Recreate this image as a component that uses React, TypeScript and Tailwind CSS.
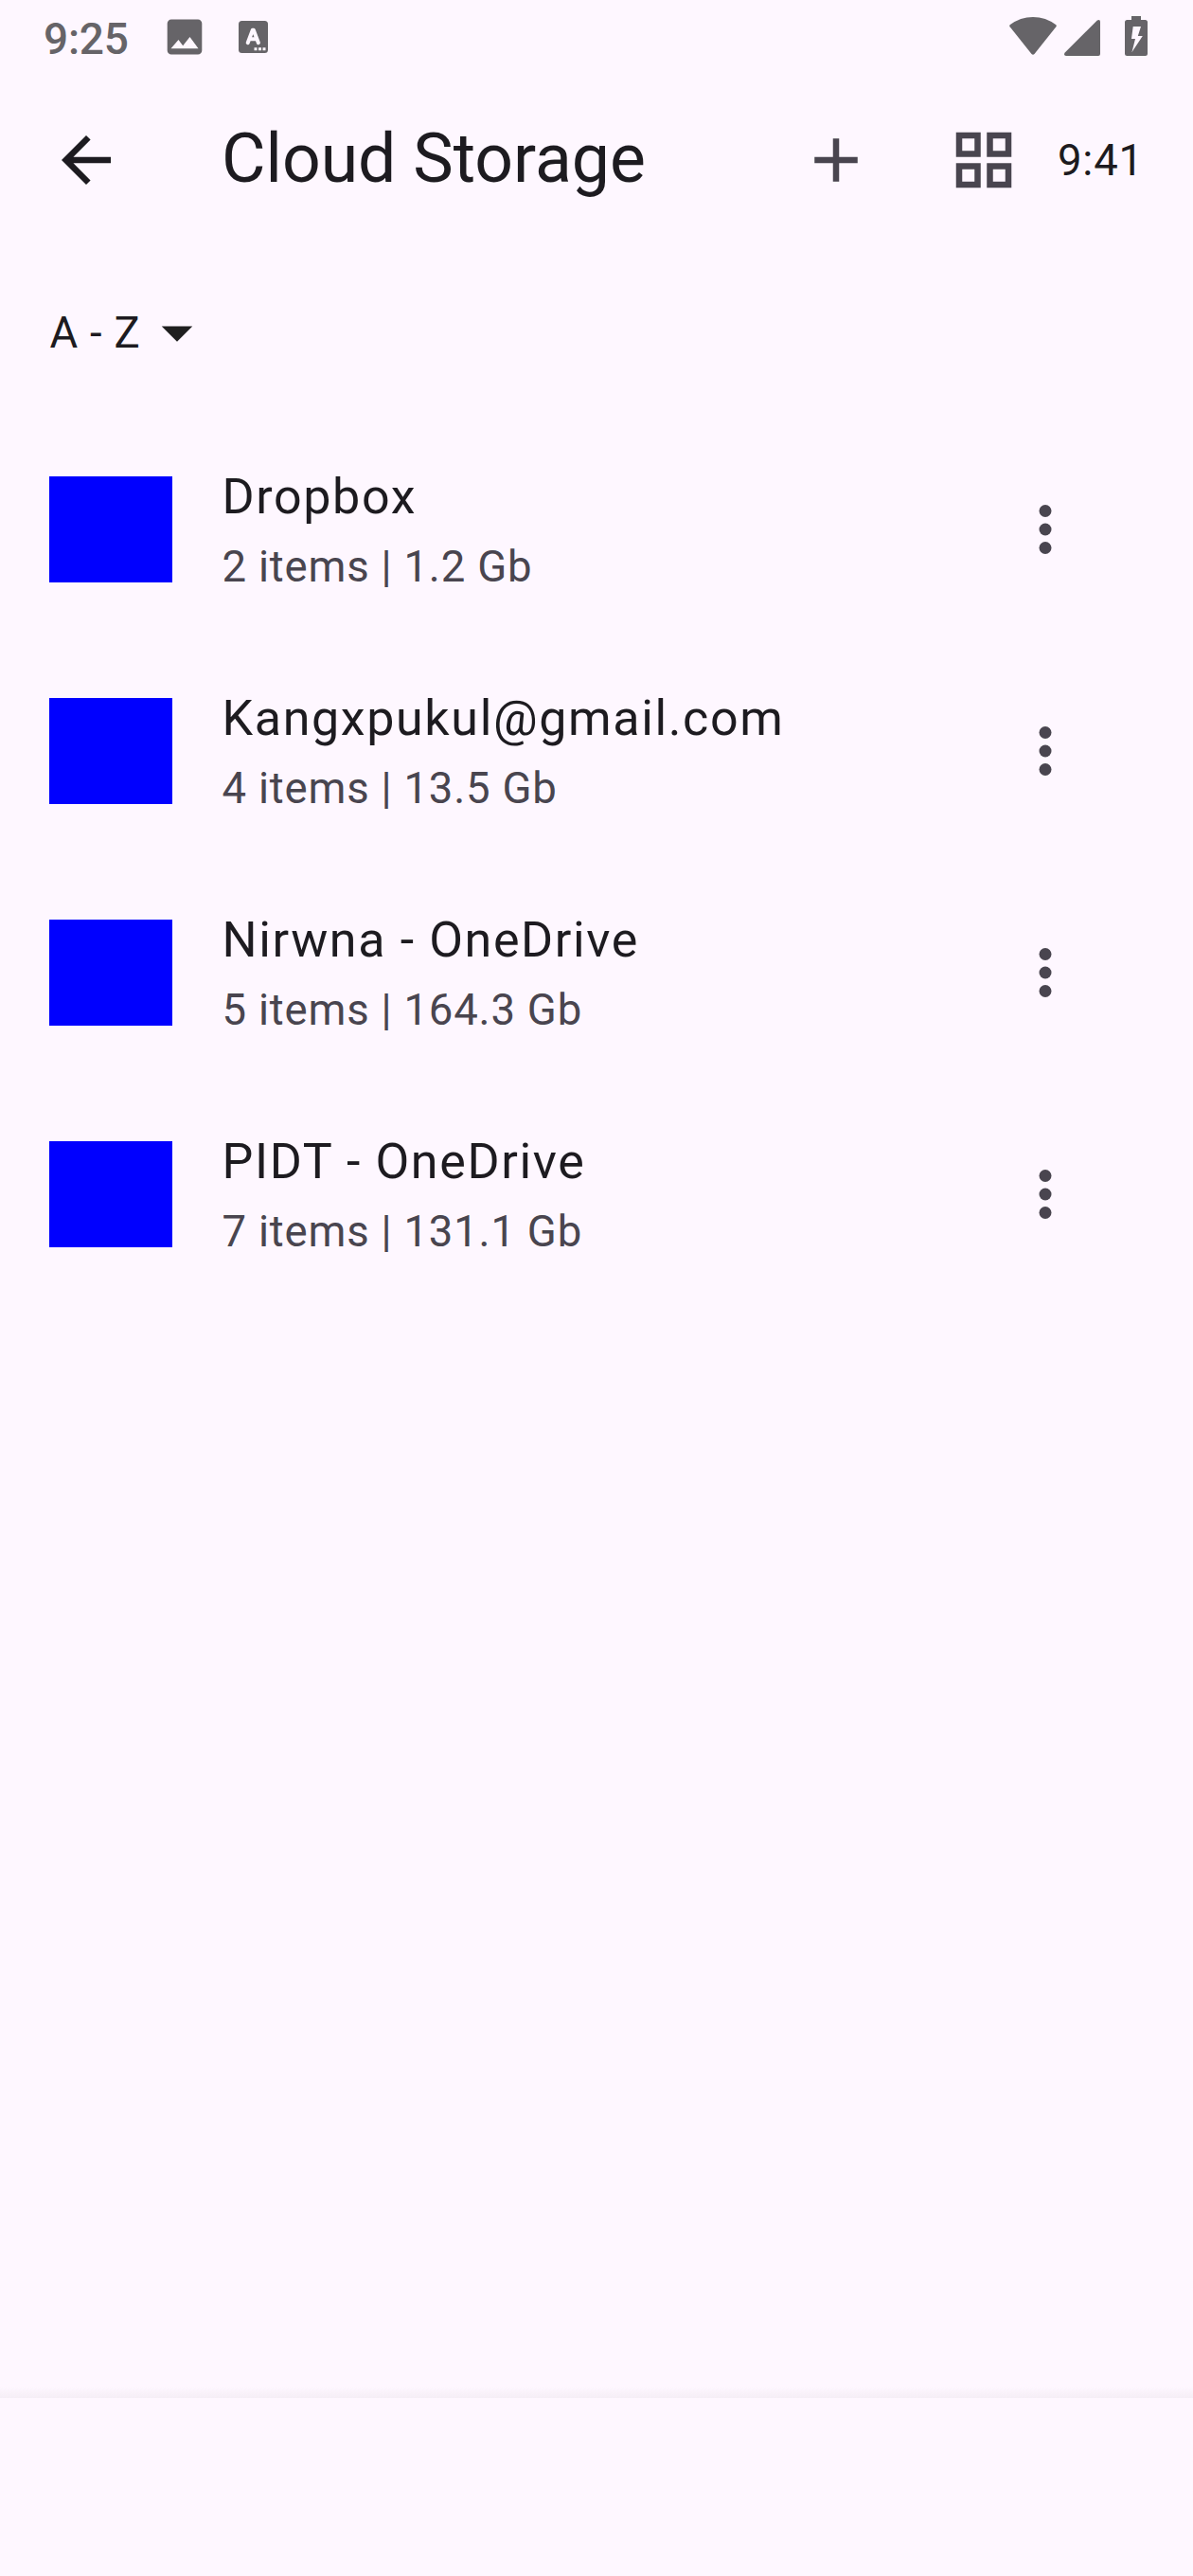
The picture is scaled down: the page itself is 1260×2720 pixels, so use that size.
import React from "react";

const items = [
  { name: "Dropbox", info: "2 items | 1.2 Gb" },
  { name: "Kangxpukul@gmail.com", info: "4 items | 13.5 Gb" },
  { name: "Nirwna - OneDrive", info: "5 items | 164.3 Gb" },
  { name: "PIDT - OneDrive", info: "7 items | 131.1 Gb" },
];

function StatusBar() {
  return (
    <div className="flex h-[78px] shrink-0 items-start pl-[46px] pr-[48px] text-[#666468]">
      <span className="mt-[14px] w-[90px] whitespace-nowrap text-[46px] font-medium leading-[54px] tracking-[-0.2px]">9:25</span>
      <svg className="ml-[40px] mt-[20px] h-[38px] w-[38px]" viewBox="0 0 38 38" fill="currentColor">
        <path fillRule="evenodd" d="M5 .5h28a4.300 4.300 0 0 1 4.300 4.300v28.400a4.300 4.300 0 0 1-4.300 4.300H5A4.300 4.300 0 0 1 .7 33.200V4.800A4.300 4.300 0 0 1 5 .5zM4.500 31.300h29L24.500 19l-7.300 9.300-4.700-6.300z" />
      </svg>
      <svg className="ml-[38px] mt-[22px] h-[34px] w-[31px]" viewBox="0 0 31 34">
        <rect width="31" height="34" rx="3.500" fill="currentColor" />
        <path d="M9.700 23.200L14.800 9.700h1L20.900 23.200M11.500 19.300h7.700" fill="none" stroke="#fef7ff" strokeWidth="4" strokeLinecap="round" strokeLinejoin="round" />
        <path d="M16.500 28.300h3v3h-3zM21 28.300h3v3h-3zM25.500 28.300h3v3h-3z" fill="#fef7ff" />
      </svg>
      <svg className="ml-auto mt-[18px] h-[40px] w-[50px]" viewBox="0 0 50 40" fill="currentColor">
        <path d="M.6 8.300Q11.500 0 25 0t24.400 8.300q.7 1 0 2L26.500 39q-1.500 1.500-3 0L.6 10.300q-.7-1 0-2z" />
      </svg>
      <svg className="ml-[8px] mt-[21px] h-[38px] w-[38px]" viewBox="0 0 38 38" fill="currentColor">
        <path d="M.5 34.800L34.800.5Q38-1 38 2v34q0 2-2 2H2q-3 0-1.500-3.200z" />
      </svg>
      <svg className="ml-[26px] mt-[17px] h-[42px] w-[24px]" viewBox="0 0 24 42" fill="currentColor">
        <path fillRule="evenodd" d="M7 0h10v4h4.500A2.500 2.500 0 0 1 24 6.500v33a2.500 2.500 0 0 1-2.500 2.500h-19A2.500 2.500 0 0 1 0 39.500v-33A2.500 2.500 0 0 1 2.500 4H7zM8.700 11L7 24h4l-3.500 14L18.800 21h-5L17 11z" />
      </svg>
    </div>
  );
}

export default function App() {
  return (
    <div className="flex h-[2720px] w-[1260px] flex-col bg-[#fef7ff] font-['Roboto',sans-serif] text-[#1d1b20]">
      <StatusBar />
      <header className="flex h-[182px] shrink-0 items-center pl-[52px] pr-[52px]">
        <svg className="h-[78px] w-[78px]" viewBox="0 0 24 24" fill="currentColor">
          <path d="M20 11H7.830l5.590-5.590L12 4l-8 8 8 8 1.410-1.410L7.830 13H20z" />
        </svg>
        <h1 className="-mt-[2px] ml-[104px] text-[71.5px] leading-[78px]">Cloud Storage</h1>
        <svg className="ml-auto h-[78px] w-[78px] text-[#49454f]" viewBox="0 0 24 24" fill="currentColor">
          <path d="M19 13h-6v6h-2v-6H5v-2h6V5h2v6h6z" />
        </svg>
        <svg className="ml-[78px] h-[78px] w-[78px] text-[#49454f]" viewBox="0 0 24 24" fill="currentColor">
          <path fillRule="evenodd" d="M3 3h8v8H3zM5 5v4h4V5zM13 3h8v8h-8zM15 5v4h4V5zM3 13h8v8H3zM5 15v4h4v-4zM13 13h8v8h-8zM15 15v4h4v-4z" />
        </svg>
        <span className="ml-[39px] w-[91px] whitespace-nowrap text-[45.5px] leading-[65px] tracking-[0.8px]">9:41</span>
      </header>
      <button className="flex h-[182px] w-fit shrink-0 items-center pl-[52.5px] text-[45.5px] leading-[65px] tracking-[0.8px]">
        A - Z
        <svg className="-ml-[0.75px] h-[78px] w-[78px] text-[#1f1f1f]" viewBox="0 0 24 24" fill="currentColor">
          <path d="M7 10l5 5 5-5z" />
        </svg>
      </button>
      <ul className="flex-1">
        {items.map((item) => (
          <li key={item.name} className="flex h-[234px] items-center pl-[52px] pr-[117px]">
            <div className="h-[112px] w-[130px] bg-[#0000ff]" />
            <div className="mt-px ml-[52.5px]">
              <div className="text-[52px] leading-[78px] tracking-[1.625px]">{item.name}</div>
              <div className="text-[45.5px] leading-[69px] tracking-[0.8px] text-[#49454f]">{item.info}</div>
            </div>
            <svg className="ml-auto h-[78px] w-[78px] text-[#49454f]" viewBox="0 0 24 24" fill="currentColor">
              <circle cx="12" cy="6" r="2" />
              <circle cx="12" cy="12" r="2" />
              <circle cx="12" cy="18" r="2" />
            </svg>
          </li>
        ))}
      </ul>
      <div className="h-[12px] shrink-0 bg-gradient-to-b from-[#fef7ff] to-[#f5eef6]" />
      <footer className="h-[188px] shrink-0" />
    </div>
  );
}
